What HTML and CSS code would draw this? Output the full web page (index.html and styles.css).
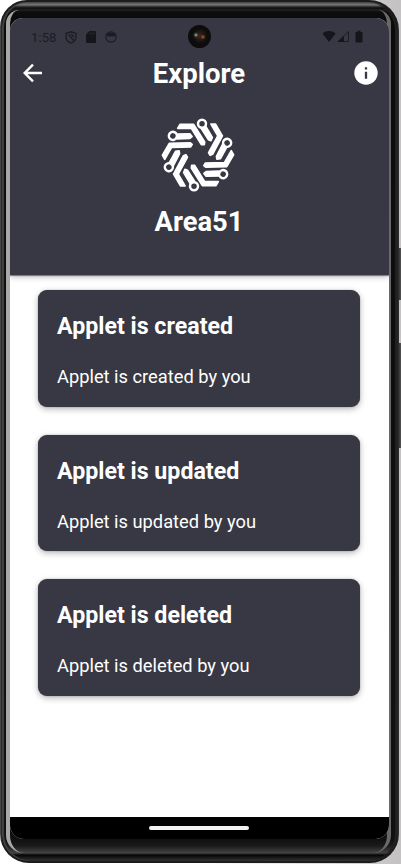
FILE: index.html
```
<!DOCTYPE html>
<html lang="en">
<head>
<meta charset="utf-8">
<title>Explore</title>
<link rel="stylesheet" href="styles.css">
</head>
<body>
<div class="stage">
  <span class="side-button power"></span>
  <span class="side-button volume"></span>
  <div class="phone">
    <div class="bezel">
      <span class="rim rim-left"></span>
      <span class="rim rim-right"></span>
      <div class="screen">
        <header class="header">
          <div class="status">
            <span class="time">1:58</span>
            <svg class="st-shield" width="12" height="13" viewBox="0 0 12 13"><path d="M1 2.400 6 .8l5 1.600v3.400c0 3-2 5.200-5 6.300C3 11 1 8.800 1 5.800zM3.500 3.500l5 6M6 3l3 3" fill="none" stroke="#1b1c23" stroke-width="1.300"/></svg>
            <svg class="st-card" width="10" height="12" viewBox="0 0 10 12"><path d="M3.500 0H9q1 0 1 1v10q0 1-1 1H1q-1 0-1-1V3.500z" fill="#15161b"/><path d="M4 1.500v2M6 1.500v2M8 1.500v2" stroke="#373844" stroke-width=".7"/></svg>
            <svg class="st-face" width="12" height="12" viewBox="0 0 12 12"><circle cx="6" cy="6" r="5.200" fill="none" stroke="#1b1c23" stroke-width="1.200"/><path d="M1.500 2.500 3 3l1-1h4l1 1 1.500-.5v2L9 5.500H3l-1.500-1z" fill="#1b1c23"/></svg>
            <svg class="st-signal" width="42" height="14" viewBox="0 0 42 14"><path d="M.5 3.500C4 .2 10 .2 13.700 3.500L7 12z" fill="#15161b"/><path d="M16 11.500 26.500 1.500v10z" fill="none" stroke="#1b1c23"/><path d="M15.500 12 22 6v6z" fill="#15161b"/><path d="M35.500.8h3V2h1.200q.8 0 .8.800v9q0 .7-.8.700h-5.400q-.8 0-.8-.7v-9q0-.8.8-.8h1.200z" fill="#15161b"/></svg>
          </div>
          <span class="camera"></span>
          <div class="toolbar">
            <svg class="back" width="20" height="20" viewBox="0 0 20 20"><path d="M19 10H2M10 1.700 1.700 10l8.300 8.300" fill="none" stroke="#fff" stroke-width="2.400"/></svg>
            <h1>Explore</h1>
            <svg class="info" width="24" height="24" viewBox="0 0 24 24"><circle cx="12" cy="12" r="11.700" fill="#fff"/><path d="M12 10.800v7M12 6.200v2.300" stroke="#373844" stroke-width="2.300"/></svg>
          </div>
          <svg class="logo" width="76" height="76" viewBox="-114 -114 228 228">
            <defs>
              <g id="arm">
                <path d="M-61-80-54-92h41L20-39l-1 8-9 0-30-49z" fill="#fff" stroke="#fff" stroke-width="5" stroke-linejoin="round"/>
                <path d="M12-82 22-88 43-53 39-43 31-46 10-79z" fill="#fff" stroke="#fff" stroke-width="5" stroke-linejoin="round"/>
                <circle cx="12" cy="-94" r="12" fill="#373844" stroke="#fff" stroke-width="7.500"/>
              </g>
            </defs>
            <use href="#arm"/>
            <use href="#arm" transform="rotate(60)"/>
            <use href="#arm" transform="rotate(120)"/>
            <use href="#arm" transform="rotate(180)"/>
            <use href="#arm" transform="rotate(240)"/>
            <use href="#arm" transform="rotate(300)"/>
          </svg>
          <h2>Area51</h2>
        </header>
        <main class="cards">
          <article class="card"><h3>Applet is created</h3><p>Applet is created by you</p></article>
          <article class="card"><h3>Applet is updated</h3><p>Applet is updated by you</p></article>
          <article class="card"><h3>Applet is deleted</h3><p>Applet is deleted by you</p></article>
        </main>
        <footer class="nav"><span class="handle"></span></footer>
      </div>
    </div>
  </div>
</div>
</body>
</html>
```
FILE: styles.css
```
* { box-sizing: border-box; }
body { margin: 0; font-family: Roboto, "Liberation Sans", sans-serif; color: #fff; }
h1, h2, h3, p { margin: 0; }
svg { display: block; }

.stage {
  position: relative;
  width: 401px;
  height: 864px;
  overflow: hidden;
  background: linear-gradient(90deg, #fff 0 50%, #c4c2c2 99%);
}
.side-button {
  position: absolute;
  right: 0;
  width: 3px;
  background: linear-gradient(90deg, #222, #555);
}
.power { top: 248px; height: 52px; }
.volume { top: 343px; height: 105px; }

.phone {
  position: relative;
  width: 399px;
  height: 863px;
  padding: 2px;
  border-radius: 27px 30px 29px 29px;
  background: linear-gradient(90deg, #555 0, #1c1c1c 2px 397px, #333);
}
.bezel {
  position: relative;
  height: 859px;
  padding: 16px 8px 27px;
  border-radius: 25px 28px 27px 27px;
  overflow: hidden;
  background: linear-gradient(180deg, #4a4a4a 0, #777 3px, #444 4px, #0c0c0c 6px, #222 8px, #0d0d0d 10px, #0b0b0b 16px, #101010 837px, #1b1b1b 844px, #444 851px, #050505 853px, #333 859px);
  box-shadow: inset 2px 0 1px #444, inset -2px 0 1px #222;
}
.rim {
  position: absolute;
  top: 8px;
  bottom: 8px;
}
.rim-left {
  left: 4px;
  width: 18px;
  border-left: 4px solid #aaa7a7;
  border-radius: 18px 0 0 24px;
}
.rim-right {
  right: 6px;
  width: 18px;
  border-right: 4px solid #686868;
  border-radius: 0 18px 24px 0;
}
.screen {
  position: relative;
  display: flex;
  flex-direction: column;
  width: 379px;
  height: 821px;
  border-radius: 13px 13px 14px 14px;
  overflow: hidden;
  background: #fff;
}
.header {
  position: relative;
  display: flex;
  flex-direction: column;
  align-items: center;
  height: 257px;
  flex: none;
  background: #373844;
  box-shadow: 0 1px 1px rgba(0, 0, 0, .4), 0 2px 6px rgba(0, 0, 0, .25);
}
.status {
  display: flex;
  align-items: center;
  width: 100%;
  height: 38px;
  padding: 0 25px 0 21px;
}
.time { width: 34px; font-size: 13px; letter-spacing: .1px; color: #1b1c23; }
.st-card { margin-left: 9px; }
.st-face { margin-left: 9px; }
.st-signal { margin-left: auto; }
.camera {
  position: absolute;
  top: 7px;
  left: 178px;
  width: 23px;
  height: 23px;
  border-radius: 50%;
  background:
    radial-gradient(circle at 8px 10px, #b5c2b2 0, #3c4a40 1.500px, transparent 3px),
    radial-gradient(circle at 15px 12px, #a76520 0, transparent 2.500px),
    radial-gradient(circle at 12px 11px, #41251f 0, #17120f 6px, #0c0c0c 8px);
}
.toolbar {
  display: flex;
  align-items: center;
  justify-content: space-between;
  width: 100%;
  height: 34px;
  padding: 0 11px 0 13px;
}
.toolbar h1 { padding: 2px 0 0 1px; font-size: 27.500px; line-height: 34px; font-weight: 700; }
.logo { margin: 27px 3px 0 0; }
.header h2 { margin: 11px 1px 0 0; font-size: 27.300px; line-height: 36px; font-weight: 700; }

.cards {
  display: flex;
  flex-direction: column;
  gap: 28px;
  flex: 1;
  padding: 15px 29px 0 28px;
}
.card {
  height: 116.500px;
  padding: 21px 19px;
  border-radius: 9px;
  background: #373844;
  box-shadow: 0 0 1px rgba(0, 0, 0, .5), 0 2px 6px rgba(0, 0, 0, .3);
}
.card h3 { font-size: 23.200px; line-height: 30px; font-weight: 700; }
.card p { margin-top: 24px; font-size: 18.300px; line-height: 24px; }

.nav {
  display: flex;
  justify-content: center;
  height: 22px;
  padding-top: 9px;
  background: #000;
}
.handle { width: 100px; height: 4px; margin-right: 1px; border-radius: 2px; background: #f2f2f2; }
```
